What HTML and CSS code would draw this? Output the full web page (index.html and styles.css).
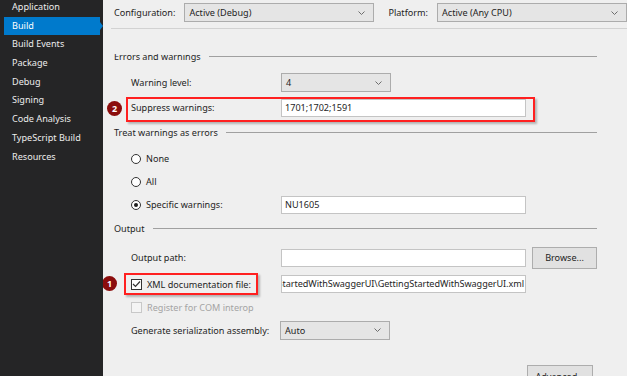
FILE: index.html
```html
<!DOCTYPE html>
<html lang="en">
<head>
    <meta charset="UTF-8">
    <title>Build Properties</title>
    <link rel="stylesheet" href="styles.css">
</head>
<body>
    <div class="sidebar">
        <div class="nav-item">Application</div>
        <div class="nav-item active">Build</div>
        <div class="nav-item">Build Events</div>
        <div class="nav-item">Package</div>
        <div class="nav-item">Debug</div>
        <div class="nav-item">Signing</div>
        <div class="nav-item">Code Analysis</div>
        <div class="nav-item">TypeScript Build</div>
        <div class="nav-item">Resources</div>
    </div>

    <div class="main">
        <div class="config-area">
            <div class="config-bar">
                <span class="config-label">Configuration:</span>
                <div class="select config-select">
                    <span>Active (Debug)</span>
                    <svg class="chevron" width="7" height="4" viewBox="0 0 7 4"><polyline points="0.5,0.5 3.5,3.5 6.5,0.5" /></svg>
                </div>
                <span class="config-label platform-label">Platform:</span>
                <div class="select platform-select">
                    <span>Active (Any CPU)</span>
                    <svg class="chevron" width="7" height="4" viewBox="0 0 7 4"><polyline points="0.5,0.5 3.5,3.5 6.5,0.5" /></svg>
                </div>
            </div>
        </div>

        <div class="scroll">
            <div class="content">
                <div class="section-head"><span>Errors and warnings</span><span class="rule"></span></div>

                <div class="row row-first">
                    <span class="label">Warning level:</span>
                    <div class="select small-select">
                        <span>4</span>
                        <svg class="chevron" width="7" height="4" viewBox="0 0 7 4"><polyline points="0.5,0.5 3.5,3.5 6.5,0.5" /></svg>
                    </div>
                </div>
                <div class="row highlight suppress">
                    <span class="badge badge-two">2</span>
                    <span class="label">Suppress warnings:</span>
                    <div class="input">1701;1702;1591</div>
                </div>

                <div class="section-head treat-head"><span>Treat warnings as errors</span><span class="rule"></span></div>

                <div class="row radio-row radio-first">
                    <span class="radio"></span><span>None</span>
                </div>
                <div class="row radio-row">
                    <span class="radio"></span><span>All</span>
                </div>
                <div class="row radio-row">
                    <span class="label radio-label"><span class="radio checked"></span><span>Specific warnings:</span></span>
                    <div class="input">NU1605</div>
                </div>

                <div class="section-head output-head"><span>Output</span><span class="rule"></span></div>

                <div class="row path-row">
                    <span class="label">Output path:</span>
                    <div class="input"></div>
                    <div class="button browse">Browse...</div>
                </div>
                <div class="row xml-row">
                    <span class="badge badge-one">1</span>
                    <span class="label"><span class="xml-box"><span class="checkbox checked">
                        <svg width="9" height="8" viewBox="0 0 9 8"><polyline points="1,4 3.5,6.5 8,1.5" /></svg>
                    </span><span>XML documentation file:</span></span></span>
                    <div class="input path-input"><span>GettingStartedWithSwaggerUI\GettingStartedWithSwaggerUI.xml</span></div>
                </div>
                <div class="row com-row">
                    <span class="checkbox disabled"></span><span class="disabled-text">Register for COM interop</span>
                </div>
                <div class="row gen-row">
                    <span class="label">Generate serialization assembly:</span>
                    <div class="select small-select">
                        <span>Auto</span>
                        <svg class="chevron" width="7" height="4" viewBox="0 0 7 4"><polyline points="0.5,0.5 3.5,3.5 6.5,0.5" /></svg>
                    </div>
                </div>

                <div class="advanced-row">
                    <div class="button advanced">Advanced...</div>
                </div>
            </div>
        </div>
    </div>
</body>
</html>
```

FILE: styles.css
```css
body {
    margin: 0;
    width: 627px;
    height: 376px;
    display: flex;
    overflow: hidden;
    font-family: "Noto Sans", "Open Sans", sans-serif;
    font-size: 9.1px;
    color: #1e1e1e;
    background-color: #efefef;
}

/* Left navigation */
.sidebar {
    width: 103px;
    flex-shrink: 0;
    background-color: #252526;
}

.nav-item {
    height: 18.7px;
    line-height: 18px;
    padding-left: 8px;
    margin-left: 4px;
    margin-right: 3px;
    color: #ececec;
    position: relative;
}

.nav-item:first-child {
    margin-top: -2px;
}

.nav-item.active {
    background-color: #007acc;
    color: #fff;
}

.nav-item.active::after {
    content: "";
    position: absolute;
    right: -3px;
    top: 5px;
    border-left: 3px solid #007acc;
    border-top: 4px solid transparent;
    border-bottom: 4px solid transparent;
}

/* Main pane */
.main {
    flex: 1;
    display: flex;
    flex-direction: column;
    min-width: 0;
}

.config-area {
    height: 54px;
    flex-shrink: 0;
    padding-left: 8px;
}

.config-bar {
    height: 29px;
    border-bottom: 1px solid #d2d2d2;
    display: flex;
    align-items: flex-start;
    padding-top: 3px;
    box-sizing: border-box;
}

.config-label {
    margin-left: 3px;
    line-height: 19px;
}

.platform-label {
    margin-left: 14px;
}

.select {
    height: 19px;
    box-sizing: border-box;
    background-color: #e5e5e5;
    border: 1px solid #acacac;
    display: flex;
    align-items: center;
    justify-content: space-between;
    padding: 0 8px 0 4px;
}

.chevron polyline {
    fill: none;
    stroke: #6d6d6d;
    stroke-width: 1;
}

.config-select {
    width: 192px;
    margin-left: 9px;
}

.platform-select {
    width: 192px;
    margin-left: 9px;
}

.small-select {
    width: 110px;
}

/* Scrolled settings */
.scroll {
    flex: 1;
    overflow: hidden;
}

.content {
    margin-top: -5px;
    padding-left: 11px;
    padding-right: 30px;
}

.section-head {
    height: 14px;
    display: flex;
    align-items: center;
    white-space: nowrap;
}

.section-head .rule {
    flex: 1;
    height: 1px;
    background-color: #a0a0a0;
    margin-left: 8px;
}

.treat-head {
    margin-top: 5px;
}

.output-head {
    margin-top: 5px;
}

.row {
    height: 25px;
    display: flex;
    align-items: center;
    margin-left: 17px;
    position: relative;
    white-space: nowrap;
}

.row-first {
    margin-top: 7px;
}

.label {
    width: 150px;
    flex-shrink: 0;
    display: flex;
    align-items: center;
}

.input {
    width: 245px;
    height: 18px;
    box-sizing: border-box;
    background-color: #fff;
    border: 1px solid #c4c4c4;
    padding: 0 3px;
    line-height: 16px;
    overflow: hidden;
    white-space: nowrap;
}

.path-input {
    display: flex;
    justify-content: flex-end;
    padding: 0 1px;
    letter-spacing: -0.05px;
}

/* Annotation boxes */
.highlight::before {
    content: "";
    position: absolute;
    left: -5px;
    right: -9px;
    top: 2px;
    bottom: -2px;
    border: 2px solid #ff2020;
    box-shadow: 2px 2px 2px rgba(0, 0, 0, 0.25);
    pointer-events: none;
}

.suppress {
    width: 395px;
}

.xml-box {
    display: flex;
    align-items: center;
    height: 18px;
    margin-left: -7px;
    padding: 0 5px 0 5px;
    border: 2px solid #ff2020;
    box-shadow: 2px 2px 2px rgba(0, 0, 0, 0.25);
}

.badge {
    position: absolute;
    width: 15px;
    height: 15px;
    border-radius: 50%;
    background-color: #8b0d0d;
    color: #fff;
    font-size: 9px;
    font-weight: bold;
    display: flex;
    align-items: center;
    justify-content: center;
}

.badge-two {
    left: -24px;
    top: 6px;
}

.badge-one {
    left: -29px;
    top: 5px;
}

/* Radios and checkboxes */
.radio-row {
    height: 23px;
}

.radio-first {
    margin-top: 8px;
}

.radio {
    width: 10px;
    height: 10px;
    box-sizing: border-box;
    border: 1px solid #333;
    border-radius: 50%;
    background-color: #fff;
    margin-right: 5px;
    flex-shrink: 0;
    display: flex;
    align-items: center;
    justify-content: center;
}

.radio.checked::after {
    content: "";
    width: 4px;
    height: 4px;
    border-radius: 50%;
    background-color: #1e1e1e;
}

.checkbox {
    width: 11px;
    height: 11px;
    box-sizing: border-box;
    border: 1px solid #333;
    background-color: #fff;
    margin-right: 5px;
    flex-shrink: 0;
    display: flex;
    align-items: center;
    justify-content: center;
}

.checkbox polyline {
    fill: none;
    stroke: #333;
    stroke-width: 1.2;
}

.checkbox.disabled {
    border-color: #c8c8c8;
    background-color: #f4f4f4;
}

.disabled-text {
    color: #a4a4a4;
}

.path-row {
    height: 27px;
    margin-top: 9px;
}

.xml-row {
    height: 26px;
}

.com-row {
    height: 20px;
}

.gen-row {
    height: 26px;
}

.gen-row .small-select {
    margin-left: -1px;
}

.button {
    height: 22px;
    box-sizing: border-box;
    background-color: #e1e1e1;
    border: 1px solid #adadad;
    display: flex;
    align-items: center;
    justify-content: center;
}

.browse {
    width: 65px;
    margin-left: 6px;
}

.advanced-row {
    display: flex;
    justify-content: flex-end;
    margin-top: 22px;
    padding-right: 4px;
}

.advanced {
    width: 66px;
}
```
